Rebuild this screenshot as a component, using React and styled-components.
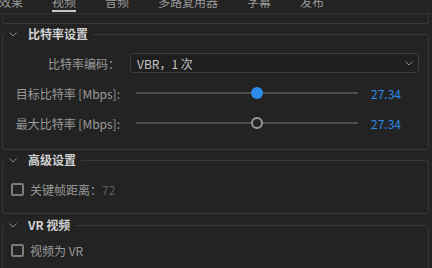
import React from "react";
import styled, { createGlobalStyle } from "styled-components";

const GlobalStyle = createGlobalStyle`
  html, body {
    margin: 0;
    padding: 0;
    background: #232323;
    overflow: hidden;
  }
  body {
    font-family: "Noto Sans CJK SC", "Noto Sans", sans-serif;
    color: #9a9a9a;
  }
`;

const tabs = ["效果", "视频", "音频", "多路复用器", "字幕", "发布"];

const Page = styled.div`
  width: 432px;
  height: 268px;
  overflow: hidden;
`;

const TabBar = styled.div`
  display: flex;
  align-items: flex-end;
  gap: 29px;
  height: 13px;
  margin-left: -1px;
  border-bottom: 1px solid #333333;
`;

const Tab = styled.div`
  font-size: 12px;
  line-height: 12px;
  padding: 0 0 2px;
  margin-bottom: 1px;
  color: #9a9a9a;
  border-bottom: 2px solid ${(p) => (p.$active ? "#c6c6c6" : "transparent")};
  white-space: nowrap;
`;

const TopBox = styled.div`
  height: 9px;
  margin: 0 3px 0 2px;
  border: 1px solid #383838;
  border-top: none;
  border-radius: 0 0 3px 3px;
`;

const Section = styled.fieldset`
  margin: ${(p) => p.$mt}px 3px 0 2px;
  padding: 0;
  border: 1px solid #383838;
  border-radius: 3px;
  min-width: 0;
`;

const Legend = styled.legend`
  display: flex;
  align-items: center;
  gap: 11px;
  margin-left: 2px;
  padding: 0 5px 0 4px;
  font-size: 12px;
  line-height: 16px;
  font-weight: bold;
  color: #d2d2d2;
`;

const Chevron = styled.svg`
  width: 8px;
  height: 5px;
  flex: none;
`;

const Body = styled.div`
  display: flex;
  flex-direction: column;
  gap: 10px;
  padding: ${(p) => p.$pt}px 9px ${(p) => p.$pb}px ${(p) => p.$pl}px;
`;

const FormRow = styled.div`
  display: grid;
  grid-template-columns: 117px 1fr;
  column-gap: 10px;
  align-items: center;
  height: 20px;
`;

const Label = styled.div`
  font-size: 12px;
  text-align: right;
  white-space: nowrap;
  color: #9a9a9a;
`;

const Select = styled.div`
  display: flex;
  align-items: center;
  justify-content: space-between;
  height: 20px;
  box-sizing: border-box;
  padding: 0 5px 0 6px;
  background: #1f1f1f;
  border: 1px solid #3a3a3a;
  border-radius: 3px;
  font-size: 12px;
  color: #c4c4c4;
`;

const SliderBox = styled.div`
  display: flex;
  align-items: center;
  gap: 13px;
  padding-left: 6px;
`;

const Track = styled.div`
  position: relative;
  width: 222px;
  height: 2px;
  background: #4e4e4e;
`;

const Thumb = styled.div`
  position: absolute;
  top: 50%;
  width: 12px;
  height: 12px;
  box-sizing: border-box;
  border-radius: 50%;
  transform: translate(-50%, -50%);
  background: ${(p) => (p.$filled ? "#2d8ceb" : "#232323")};
  border: ${(p) => (p.$filled ? "none" : "2px solid #9a9a9a")};
`;

const Value = styled.div`
  font-size: 12px;
  color: #2d8ceb;
`;

const CheckRow = styled.div`
  display: flex;
  align-items: center;
  gap: 6px;
  height: 20px;
  font-size: 12px;
  color: #9a9a9a;
`;

const Box = styled.span`
  width: 13px;
  height: 13px;
  box-sizing: border-box;
  border: 2px solid #7c7c7c;
  border-radius: 2px;
  flex: none;
`;

const Dim = styled.span`
  color: #5e5e5e;
`;

const DownChevron = () => (
  <Chevron viewBox="0 0 8 5">
    <path d="M0.5 0.5 L4 4 L7.5 0.5" fill="none" stroke="#8a8a8a" strokeWidth="1" />
  </Chevron>
);

const Slider = ({ value, pct, filled }) => (
  <SliderBox>
    <Track>
      <Thumb $filled={filled} style={{ left: `${pct}%` }} />
    </Track>
    <Value>{value}</Value>
  </SliderBox>
);

const App = () => {
  return (
    <Page>
      <GlobalStyle />
      <TabBar>
        {tabs.map((t, i) => (
          <Tab key={i} $active={t === "视频"}>
            {t}
          </Tab>
        ))}
      </TabBar>
      <TopBox />

      <Section $mt={2}>
        <Legend>
          <DownChevron />
          比特率设置
        </Legend>
        <Body $pt={11} $pb={16} $pl={0}>
          <FormRow>
            <Label>比特率编码：</Label>
            <Select>
              <span>VBR，1 次</span>
              <DownChevron />
            </Select>
          </FormRow>
          <FormRow>
            <Label>目标比特率 [Mbps]:</Label>
            <Slider value="27.34" pct={54.5} filled />
          </FormRow>
          <FormRow>
            <Label>最大比特率 [Mbps]:</Label>
            <Slider value="27.34" pct={54.5} />
          </FormRow>
        </Body>
      </Section>

      <Section $mt={2}>
        <Legend>
          <DownChevron />
          高级设置
        </Legend>
        <Body $pt={11} $pb={14} $pl={8}>
          <CheckRow>
            <Box />
            <span>
              关键帧距离：<Dim>72</Dim>
            </span>
          </CheckRow>
        </Body>
      </Section>

      <Section $mt={3}>
        <Legend>
          <DownChevron />
          VR 视频
        </Legend>
        <Body $pt={7} $pb={16} $pl={8}>
          <CheckRow>
            <Box />
            <span>视频为 VR</span>
          </CheckRow>
        </Body>
      </Section>
    </Page>
  );
};

export default App;
